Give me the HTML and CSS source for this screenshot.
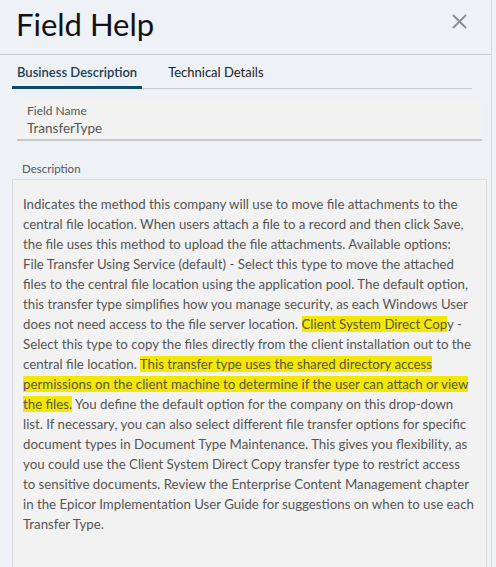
FILE: index.html
```html
<!DOCTYPE html>
<html lang="en">
<head>
  <meta charset="UTF-8">
  <meta name="viewport" content="width=device-width, initial-scale=1.0">
  <title>Field Help</title>
  <link rel="stylesheet" href="styles.css">
</head>
<body>
  <div class="panel">
    <div class="panel-header">
      <h1 class="panel-title">Field Help</h1>
      <button class="close-btn" aria-label="Close">
        <svg width="15" height="15" viewBox="0 0 15 15">
          <path d="M1 1 L14 14 M14 1 L1 14" stroke="#8c9095" stroke-width="2" fill="none"/>
        </svg>
      </button>
    </div>

    <div class="tabs">
      <a class="tab active" href="#">Business Description</a>
      <a class="tab" href="#">Technical Details</a>
    </div>

    <div class="field-box">
      <div class="field-label">Field Name</div>
      <div class="field-value">TransferType</div>
    </div>

    <div class="desc-label">Description</div>
    <div class="desc-box">
      Indicates the method this company will use to move file attachments to the central file location. When users attach a file to a record and then click Save, the file uses this method to upload the file attachments. Available options: File Transfer Using Service (default) - Select this type to move the attached files to the central file location using the application pool. The default option, this transfer type simplifies how you manage security, as each Windows User does not need access to the file server location. <mark>Client System Direct Cop</mark>y - Select this type to copy the files directly from the client installation out to the central file location. <mark>This transfer type uses the shared directory access permissions on the client machine to determine if the user can attach or view the files.</mark> You define the default option for the company on this drop-down list. If necessary, you can also select different file transfer options for specific document types in Document Type Maintenance. This gives you flexibility, as you could use the Client System Direct Copy transfer type to restrict access to sensitive documents. Review the Enterprise Content Management chapter in the Epicor Implementation User Guide for suggestions on when to use each Transfer Type.
    </div>
  </div>
</body>
</html>
```

FILE: styles.css
```css
body {
  margin: 0;
  background-color: #eef1f5;
  font-family: Lato, "Noto Sans", sans-serif;
  color: #555;
  overflow: hidden;
}
.panel {
  width: 492px;
  height: 567px;
  border-right: 1px solid #d6d9dd;
  box-sizing: border-box;
}
.panel-header {
  display: flex;
  justify-content: space-between;
  align-items: center;
  height: 54px;
  padding: 0 24px 0 16px;
  border-bottom: 1px solid #c9ccd0;
}
.panel-title {
  margin: 0;
  font-size: 31px;
  font-weight: 400;
  color: #111;
  margin-top: -6px;
}
.close-btn {
  border: none;
  background: none;
  padding: 0;
  margin-top: -8px;
  cursor: pointer;
}
.tabs {
  display: flex;
  margin: 9px 19px 0 12px;
  border-bottom: 1px solid #c9cccf;
}
.tab {
  padding: 0 5px 6px 5px;
  font-size: 13px;
  color: #222;
  text-decoration: none;
  margin-right: 21px;
}
.tab.active {
  color: #1c3d58;
  font-weight: 600;
  border-bottom: 3px solid #0f4a6c;
  margin-bottom: -1px;
}
.field-box {
  margin: 9px 9px 0 17px;
  padding: 5px 10px 2px 10px;
  background-color: #f2f2f2;
  border-bottom: 2px solid #c8c8c8;
}
.field-label {
  font-size: 12px;
  line-height: 16px;
}
.field-value {
  font-size: 13.5px;
  line-height: 18px;
}
.desc-label {
  margin: 20px 0 0 22px;
  font-size: 11.5px;
  line-height: 16px;
}
.desc-box {
  margin: 2px 4px 0 12px;
  padding: 14px 11px 40px 10px;
  background-color: #f2f2f2;
  border: 1px solid #dcdcdc;
  font-size: 13.25px;
  line-height: 20px;
}
mark {
  background-color: #f4e800;
  color: #555;
}
```
